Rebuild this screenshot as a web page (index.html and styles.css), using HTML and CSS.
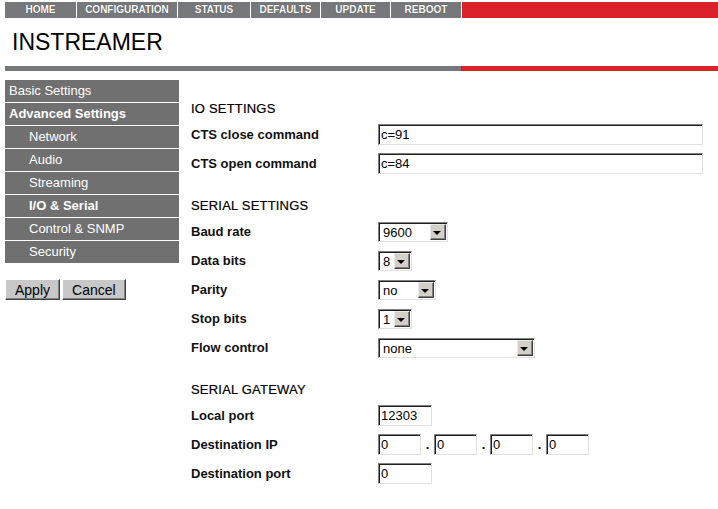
FILE: index.html
```html
<!DOCTYPE html>
<html>
<head>
  <title>INSTREAMER - I/O &amp; Serial</title>
  <link rel="stylesheet" href="styles.css">
</head>
<body>

<div class="topnav">
  <a href="#" class="tab w-home">HOME</a>
  <a href="#" class="tab w-config">CONFIGURATION</a>
  <a href="#" class="tab w-status">STATUS</a>
  <a href="#" class="tab w-defaults">DEFAULTS</a>
  <a href="#" class="tab w-update">UPDATE</a>
  <a href="#" class="tab w-reboot">REBOOT</a>
  <div class="tab-fill"></div>
</div>

<div class="title">INSTREAMER</div>

<div class="rule">
  <div class="rule-grey"></div>
  <div class="rule-red"></div>
</div>

<div class="page">
  <div class="side">
    <ul class="menu">
      <li><a href="#">Basic Settings</a></li>
      <li><a href="#" class="bold">Advanced Settings</a></li>
      <li class="sub"><a href="#">Network</a></li>
      <li class="sub"><a href="#">Audio</a></li>
      <li class="sub"><a href="#">Streaming</a></li>
      <li class="sub"><a href="#" class="bold">I/O &amp; Serial</a></li>
      <li class="sub"><a href="#">Control &amp; SNMP</a></li>
      <li class="sub"><a href="#">Security</a></li>
    </ul>
    <div class="actions">
      <button type="button" class="btn">Apply</button>
      <button type="button" class="btn">Cancel</button>
    </div>
  </div>

  <form class="content">
    <div class="section">
      <h3>IO SETTINGS</h3>
      <div class="row">
        <label>CTS close command</label>
        <input type="text" class="field wide" value="c=91">
      </div>
      <div class="row">
        <label>CTS open command</label>
        <input type="text" class="field wide" value="c=84">
      </div>
    </div>

    <div class="section">
      <h3>SERIAL SETTINGS</h3>
      <div class="row">
        <label>Baud rate</label>
        <span class="select s-baud"><select><option>9600</option><option>19200</option><option>38400</option><option>57600</option><option>115200</option></select></span>
      </div>
      <div class="row">
        <label>Data bits</label>
        <span class="select s-small"><select><option>8</option><option>7</option></select></span>
      </div>
      <div class="row">
        <label>Parity</label>
        <span class="select s-parity"><select><option>no</option><option>even</option><option>odd</option></select></span>
      </div>
      <div class="row">
        <label>Stop bits</label>
        <span class="select s-small"><select><option>1</option><option>2</option></select></span>
      </div>
      <div class="row">
        <label>Flow control</label>
        <span class="select s-flow"><select><option>none</option><option>hardware</option></select></span>
      </div>
    </div>

    <div class="section">
      <h3>SERIAL GATEWAY</h3>
      <div class="row">
        <label>Local port</label>
        <input type="text" class="field port" value="12303">
      </div>
      <div class="row">
        <label>Destination IP</label>
        <div class="ip">
          <input type="text" class="field octet" value="0"><span class="dot">.</span><input type="text" class="field octet" value="0"><span class="dot">.</span><input type="text" class="field octet" value="0"><span class="dot">.</span><input type="text" class="field octet" value="0">
        </div>
      </div>
      <div class="row">
        <label>Destination port</label>
        <input type="text" class="field port" value="0">
      </div>
    </div>
  </form>
</div>

</body>
</html>
```

FILE: styles.css
```css
body {
  margin: 0;
  padding: 2px 0 0 5px;
  font-family: "Liberation Sans", Arial, sans-serif;
  background-color: #fff;
  color: #000;
}

/* top navigation */
.topnav {
  display: flex;
  height: 16px;
  gap: 1px;
}

.tab {
  display: block;
  background-color: #77787c;
  color: #fff;
  font-size: 10px;
  font-weight: bold;
  line-height: 16px;
  text-align: center;
  text-decoration: none;
  text-shadow: 0 0 1px rgba(0, 0, 0, 0.6);
}

.w-home { width: 71px; }
.w-config { width: 100px; }
.w-status { width: 72px; }
.w-defaults { width: 69px; }
.w-update { width: 69px; }
.w-reboot { width: 70px; }

.tab-fill {
  flex: 1;
  background-color: #da2028;
}

.title {
  height: 38px;
  padding: 10px 0 0 7px;
  font-size: 23px;
  line-height: 28px;
}

.rule {
  display: flex;
  height: 5px;
  margin-bottom: 9px;
}

.rule-grey {
  width: 456px;
  background-color: #77787c;
}

.rule-red {
  flex: 1;
  background-color: #da2028;
}

/* sidebar + form */
.page {
  display: flex;
  gap: 12px;
}

.side {
  width: 174px;
}

.menu {
  list-style: none;
  margin: 0;
  padding: 0;
}

.menu li {
  margin-bottom: 1px;
}

.menu a {
  display: block;
  height: 22px;
  padding-left: 4px;
  background-color: #707070;
  color: #fff;
  font-size: 13px;
  line-height: 22px;
  text-decoration: none;
}

.menu .sub a {
  padding-left: 24px;
}

.menu a.bold {
  font-weight: bold;
}

.actions {
  display: flex;
  gap: 2px;
  margin-top: 16px;
}

.btn {
  height: 21px;
  padding: 0 9px;
  font-family: "Liberation Sans", Arial, sans-serif;
  font-size: 14px;
  color: #000;
  background-color: #c8c8c8;
  border: 1px solid;
  border-color: #fff #404040 #404040 #fff;
  box-shadow: inset -1px -1px 0 #808080;
}

.content {
  flex: 1;
  padding-top: 17px;
}

.section + .section {
  margin-top: 16px;
}

.section h3 {
  margin: 0;
  height: 23px;
  font-size: 13px;
  font-weight: normal;
  line-height: 23px;
  color: #000;
  letter-spacing: 0.2px;
  -webkit-text-stroke: 0.2px #000;
}

.row {
  display: flex;
  align-items: center;
  height: 29px;
}

.row label {
  width: 187px;
  font-size: 13px;
  font-weight: bold;
  color: #111;
}

.field {
  box-sizing: border-box;
  height: 21px;
  padding: 0 2px;
  font-family: "Liberation Sans", Arial, sans-serif;
  font-size: 13px;
  color: #000;
  background-color: #fff;
  border: 1px solid;
  border-color: #808080 #e0e0e0 #e0e0e0 #808080;
  box-shadow: inset 1px 1px 0 #202020;
}

.wide { width: 325px; }
.port { width: 54px; }
.octet { width: 43px; }

.ip {
  display: flex;
  align-items: center;
}

.dot {
  width: 13px;
  text-align: center;
  font-size: 13px;
  font-weight: bold;
}

/* classic drop-down box with grey arrow button */
.select {
  position: relative;
  display: inline-block;
  box-sizing: border-box;
  height: 20px;
  background-color: #fff;
  border: 1px solid;
  border-color: #808080 #e0e0e0 #e0e0e0 #808080;
  box-shadow: inset 1px 1px 0 #202020;
}

.select select {
  appearance: none;
  -webkit-appearance: none;
  width: 100%;
  height: 100%;
  margin: 0;
  padding: 1px 0 0 4px;
  border: none;
  background: transparent;
  font-family: "Liberation Sans", Arial, sans-serif;
  font-size: 13px;
  color: #000;
  outline: none;
}

.select::after {
  content: "";
  position: absolute;
  top: 1px;
  right: 1px;
  width: 16px;
  height: 16px;
  box-sizing: border-box;
  background-color: #d4d0c8;
  border: 1px solid;
  border-color: #e8e8e8 #404040 #404040 #e8e8e8;
  box-shadow: inset -1px -1px 0 #808080;
  pointer-events: none;
}

.select::before {
  content: "";
  position: absolute;
  top: 8px;
  right: 6px;
  z-index: 1;
  border-left: 4px solid transparent;
  border-right: 4px solid transparent;
  border-top: 4px solid #000;
  pointer-events: none;
}

.s-baud { width: 70px; }
.s-small { width: 34px; }
.s-parity { width: 58px; }
.s-flow { width: 157px; }
```
